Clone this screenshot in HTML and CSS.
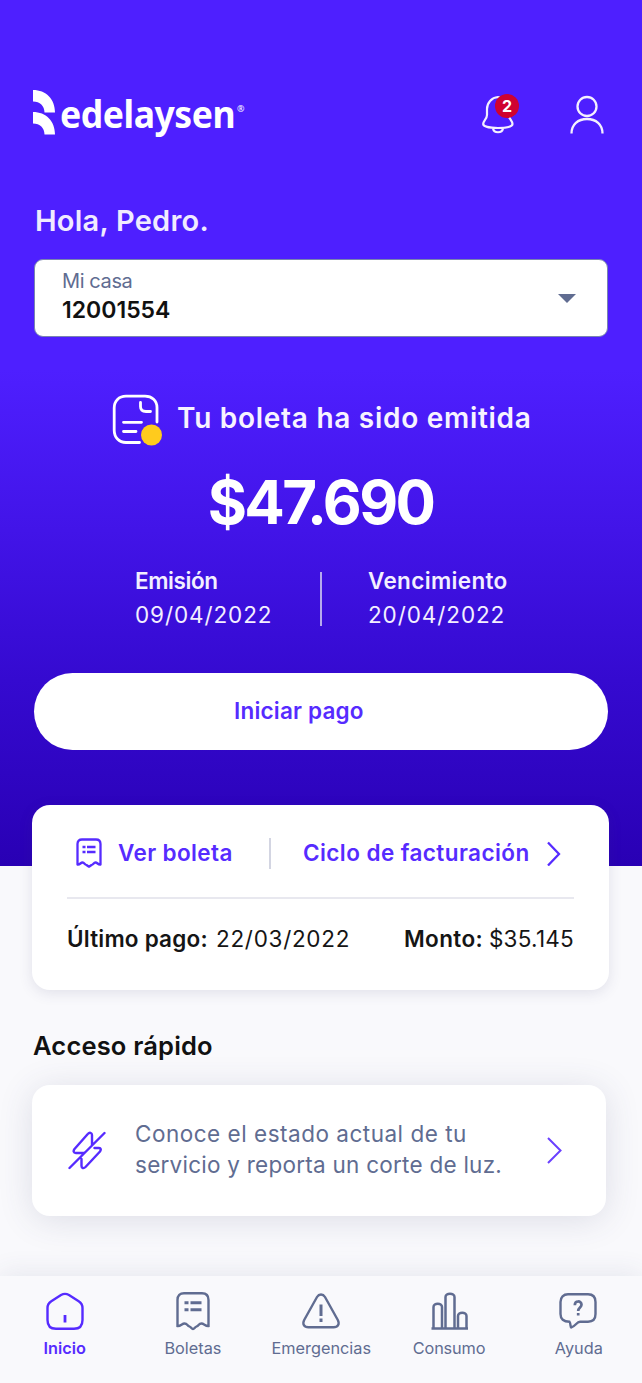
FILE: index.html
```html
<!DOCTYPE html>
<html lang="es">
<head>
<meta charset="utf-8">
<title>Edelaysen</title>
<link rel="stylesheet" href="styles.css">
</head>
<body>
<div class="app">
  <section class="hero">
    <header class="topbar">
      <div class="logo">
        <svg class="logo-mark" width="23" height="46" viewBox="0 0 23 46" fill="#fff"><path d="M0 0C13 0 22 9 22 22.500H11.500C11.500 16 7 11.500 0 11.500Z"/><path d="M0 22C13 22 22 31 22 44.500H11.500C11.500 38 7 33.500 0 33.500Z"/></svg>
        <span class="logo-name">edelaysen</span><span class="logo-reg">®</span>
      </div>
      <div class="actions">
        <div class="bell">
          <svg width="32" height="40" viewBox="0 0 32 40" fill="none" stroke="#f4f0ff" stroke-width="2.200"><path d="M16 2C9.500 2.500 5 8 5 14V20C5 24 1.200 25.500 1.200 29C1.200 31.500 7 33 16 33S30.500 31.500 30.500 29C30.500 26 27 24 26.500 20V14C26 8 22 2.500 16 2Z"/><path d="M11 33.500C12 38.500 20 38.500 21 33.500"/></svg>
          <span class="badge">2</span>
        </div>
        <svg class="user" width="34" height="40" viewBox="0 0 34 40" fill="none" stroke="#f4f0ff" stroke-width="2.300"><circle cx="17" cy="11.500" r="9.500"/><path d="M1.500 38.500C1.500 29.500 8 24 17 24S32.500 29.500 32.500 38.500"/></svg>
      </div>
    </header>
    <h1 class="greeting">Hola, Pedro.</h1>
    <div class="select">
      <div class="select-text"><span class="select-label">Mi casa</span><span class="select-value">12001554</span></div>
      <svg width="18" height="9" viewBox="0 0 18 9"><path d="M0 0H18L9 9Z" fill="#606c91"/></svg>
    </div>
    <div class="issued">
      <svg width="52" height="52" viewBox="0 0 52 52" fill="none" stroke="#fff" stroke-width="2.800" stroke-linecap="round"><path d="M45 28V13.500C45 6.500 40 2.200 33 2.200H14C7 2.200 2.200 7 2.200 14V36C2.200 43.500 7 48.500 14 48.500H27.500"/><path d="M28.500 8.500V12.500C28.500 16 30.500 17.500 34 17.500H38.500M11.500 28.300H29.500M11.500 37.500H24"/><circle cx="39.500" cy="41" r="10.500" fill="#ffcb1d" stroke="none"/></svg>
      <span class="issued-text">Tu boleta ha sido emitida</span>
    </div>
    <div class="amount">$47.690</div>
    <div class="dates">
      <div class="date"><b class="emi">Emisión</b><span>09/04/2022</span></div>
      <i class="date-sep"></i>
      <div class="date"><b class="ven">Vencimiento</b><span>20/04/2022</span></div>
    </div>
    <button class="pay"><span>Iniciar pago</span></button>
  </section>

  <section class="bill-card">
    <div class="bill-links">
      <svg class="receipt" width="26" height="30" viewBox="0 0 26 30" fill="none" stroke="#562bff" stroke-width="2.300"><path d="M1.500 26.500V6C1.500 3 3.200 1.500 6 1.500H20C22.800 1.500 24.500 3 24.500 6V26.500C22 27 21.500 24.500 19.500 24.500C17.500 24.500 17.500 26.500 15.500 27L13 28.700L10.500 27C8.500 26.500 8.500 24.500 6.500 24.500C4.500 24.500 4 27 1.500 26.500Z" stroke-linejoin="round"/><path d="M6.500 9H9.500M11 9H19.500M6.500 14H9.500M11 14H19.500" stroke-width="2.400"/></svg>
      <span class="ver">Ver boleta</span>
      <i class="link-sep"></i>
      <span class="ciclo">Ciclo de facturación</span>
      <svg class="chev" width="14" height="26" viewBox="0 0 14 26" fill="none" stroke="#562bff" stroke-width="2.300"><path d="M1 2.500L12 14L1 25.500"/></svg>
    </div>
    <div class="last">
      <b class="ultimo">Último pago:</b><span class="ufecha">22/03/2022</span>
      <b class="monto">Monto:</b><span class="mvalor">$35.145</span>
    </div>
  </section>

  <h2 class="quick-title">Acceso rápido</h2>
  <section class="quick">
    <svg width="38" height="40" viewBox="0 0 38 40" fill="none" stroke="#562bff" stroke-width="2.400" stroke-linejoin="round" stroke-linecap="round"><path d="M1.500 37L36.500 2M24 14V4C24 1.500 21.500 1 20 2.800L6.500 18C5 20 5.500 22 7.800 22H16M26.500 17H31C33 17 33.200 18.800 32 20.500L17.500 36C15.500 38 13.500 37 13.500 35V28"/></svg>
    <p><span class="q1">Conoce el estado actual de tu</span><br><span class="q2">servicio y reporta un corte de luz.</span></p>
    <svg width="16" height="28" viewBox="0 0 16 28" fill="none" stroke="#6a40ff" stroke-width="2"><path d="M1 1L13.500 13.500L1 26"/></svg>
  </section>

  <nav class="tabs">
    <a class="tab active"><svg width="40" height="40" viewBox="0 0 40 40"><path d="M2.500 16C2.500 12.500 3.700 11 6.300 9.300L16 3C19 1.300 21 1.300 24 3L33.700 9.300C36.300 11 37.500 12.500 37.500 16V28C37.500 33.500 34.500 36.800 29 36.800H11C5.500 36.800 2.500 33.500 2.500 28Z"/><path d="M20 23V30.500" stroke-width="2.800"/></svg><span>Inicio</span></a>
    <a class="tab"><svg width="40" height="40" viewBox="0 0 40 40"><path d="M4.500 34V8C4.500 3.500 7 1.300 11 1.300H29C33 1.300 35.500 3.500 35.500 8V34C32.500 34.500 31 31.500 28.500 31.500C25.500 31.500 26 33.500 23.500 34.500C21.500 35.300 21.500 37 20 37S18.500 35.300 16.500 34.500C14 33.500 14.500 31.500 11.500 31.500C9 31.500 7.500 34.500 4.500 34Z"/><path d="M11.500 10.800H15.500M17.500 10.800H28.500M11.500 17.800H15.500M17.500 17.800H28.500" stroke-width="3"/></svg><span>Boletas</span></a>
    <a class="tab"><svg width="40" height="40" viewBox="0 0 40 40"><path d="M16 5C18 1.700 22 1.700 24 5L36.800 28C38.800 32 37 35.300 32.500 35.300H7.500C3 35.300 1.200 32 3.200 28Z"/><path d="M20 12.500V24M20 26.500V30" stroke-width="3"/></svg><span>Emergencias</span></a>
    <a class="tab consumo"><svg width="40" height="40" viewBox="0 0 40 40"><path d="M1.500 36.500H38M3.500 36V15C3.500 10.500 12 10.500 12 15V36M15.500 36V5C15.500 .5 24.500 .5 24.500 5V36M28 36V24C28 19.500 36.500 19.500 36.500 24V36" stroke-width="2.500"/></svg><span>Consumo</span></a>
    <a class="tab ayuda"><svg width="40" height="40" viewBox="0 0 40 40"><path d="M10 2.300H30C34.500 2.300 37.500 5 37.500 10V22C37.500 27 34.500 29.700 30 29.700H22C18.500 29.700 17.500 34.500 13 35.500C12.500 35.500 12.700 31 11.500 29.700C5.500 29.700 2.500 27 2.500 22V10C2.500 5 5.500 2.300 10 2.300Z"/><path d="M16.800 13.200C16.800 8.300 23.500 8.300 23.500 12.800C23.500 15.500 20.200 15.500 20.200 19M20.200 21V23.500" stroke-width="2.700"/></svg><span>Ayuda</span></a>
  </nav>
</div>
</body>
</html>
```
FILE: styles.css
```css
* { box-sizing: border-box; }
body { margin: 0; background: #f9f9fc; font-family: Inter, "Liberation Sans", sans-serif; }
svg { display: block; flex: none; }
b { font-weight: 600; }
span, b, h1, h2 { white-space: nowrap; }
.app { width: 642px; height: 1383px; display: flex; flex-direction: column; overflow: hidden; background: #f9f9fc; }
.hero { height: 866px; flex: none; padding: 90px 34px 0; background: linear-gradient(180deg, #4e1fff 0, #4e1fff 370px, #4214e8 530px, #350ad0 680px, #2900b4 866px); color: #fff; }
.topbar { height: 46px; display: flex; justify-content: space-between; margin-left: -1px; }
.logo { display: flex; }
.logo-name { width: 177px; font: 700 38px/46px "Noto Sans", sans-serif; margin-left: 4px; letter-spacing: -.500px; transform: scaleX(.936); transform-origin: left; }
.logo-reg { font: 400 9px/12px "Noto Sans", sans-serif; margin: 13px 0 0; }
.actions { display: flex; gap: 56px; padding: 5px 4px 0 0; }
.bell { position: relative; width: 32px; height: 40px; }
.badge { position: absolute; left: 13px; top: -1px; width: 24px; height: 24px; border-radius: 50%; background: #cf0230; font: 700 16px/24px Inter, sans-serif; text-align: center; }
.greeting { margin: 66px 0 0 1px; font-size: 29px; line-height: 38px; font-weight: 600; letter-spacing: .250px; color: #f0ebff; }
.select { margin: 19px 0 0; width: 574px; height: 78px; background: #fff; border: 1.500px solid #7984b0; border-radius: 9px; display: flex; align-items: center; justify-content: space-between; padding: 0 31px 0 27px; }
.select-text { display: flex; flex-direction: column; margin-top: -4px; }
.select-label { font-size: 20px; line-height: 28px; letter-spacing: -.400px; color: #606c91; }
.select-value { font-size: 23px; line-height: 30px; font-weight: 600; color: #111; }
.issued { margin-top: 57px; padding-left: 78px; height: 52px; display: flex; gap: 13px; }
.issued-text { font-size: 28px; line-height: 48px; font-weight: 600; letter-spacing: .720px; color: #f7f3ff; }
.amount { margin-top: 18px; padding-right: 1px; height: 76px; line-height: 76px; text-align: center; font-size: 60px; font-weight: 700; letter-spacing: -2.600px; }
.dates { margin-top: 24px; height: 68px; display: flex; }
.date { display: flex; flex-direction: column; width: 185px; margin-left: 101px; font-size: 22.500px; line-height: 34px; color: #f3efff; }
.date span { letter-spacing: .900px; }
.emi { letter-spacing: -.400px; }
.ven { letter-spacing: .350px; }
.date-sep { width: 2px; height: 54px; margin: 8px 0 0; background: #b6a9ed; }
.date-sep + .date { margin-left: 46px; }
.pay { display: block; width: 574px; height: 77px; margin-top: 41px; border: 0; border-radius: 39px; background: #fff; text-align: left; padding: 0 0 2px 200px; font: 600 22.500px/75px Inter, sans-serif; letter-spacing: .200px; color: #562bff; }
.bill-card { position: relative; width: 577px; height: 185px; flex: none; margin: -61px 0 0 32px; border-radius: 18px; background: #fff; box-shadow: 0 3px 14px rgba(60, 65, 110, .13); padding: 0 35px; }
.bill-links { height: 94px; display: flex; align-items: center; border-bottom: 2px solid #e8e8ef; color: #562bff; font-size: 22.500px; font-weight: 600; padding: 4px 0 0 9px; }
.ver { width: 151px; margin: -2px 0 0 16px; letter-spacing: .380px; }
.link-sep { width: 2px; height: 31px; background: #d3d5e2; }
.ciclo { width: 244px; margin: -2px 0 0 32px; letter-spacing: .430px; }
.last { height: 78px; display: flex; align-items: center; font-size: 22.500px; color: #151515; }
.ultimo { width: 149px; letter-spacing: .200px; }
.ufecha { width: 188px; letter-spacing: .700px; }
.monto { width: 85px; letter-spacing: .400px; }
.mvalor { letter-spacing: .250px; }
.quick-title { margin: 39px 0 0 33px; height: 36px; font-size: 25.500px; line-height: 34px; font-weight: 600; letter-spacing: .180px; color: #111; }
.quick { margin: 20px 0 0 32px; width: 574px; height: 131px; flex: none; border-radius: 18px; background: #fff; box-shadow: 0 4px 34px rgba(60, 65, 110, .15); display: flex; align-items: center; padding: 0 0 0 36px; }
.quick p { margin: -4px 0 0 29px; width: 412px; font-size: 22.500px; line-height: 31px; color: #606c91; }
.q1 { letter-spacing: .510px; }
.q2 { letter-spacing: .250px; }
.tabs { position: relative; height: 107px; margin-top: 60px; flex: none; display: flex; padding: 16px 0 0 .500px; background: #f9f9fc; box-shadow: 0 -4px 24px rgba(60, 65, 110, .09); }
.tab { width: 128.500px; display: flex; flex-direction: column; align-items: center; color: #606c91; font-size: 16.300px; line-height: 24px; gap: 4px; }
.tab svg { fill: none; stroke: currentColor; stroke-width: 2.400; }
.tab.active { color: #562bff; }
.tab.active span { font-weight: 600; }
.consumo span { letter-spacing: -.150px; margin-right: 1px; }
.ayuda span { margin-left: 2px; }
```
